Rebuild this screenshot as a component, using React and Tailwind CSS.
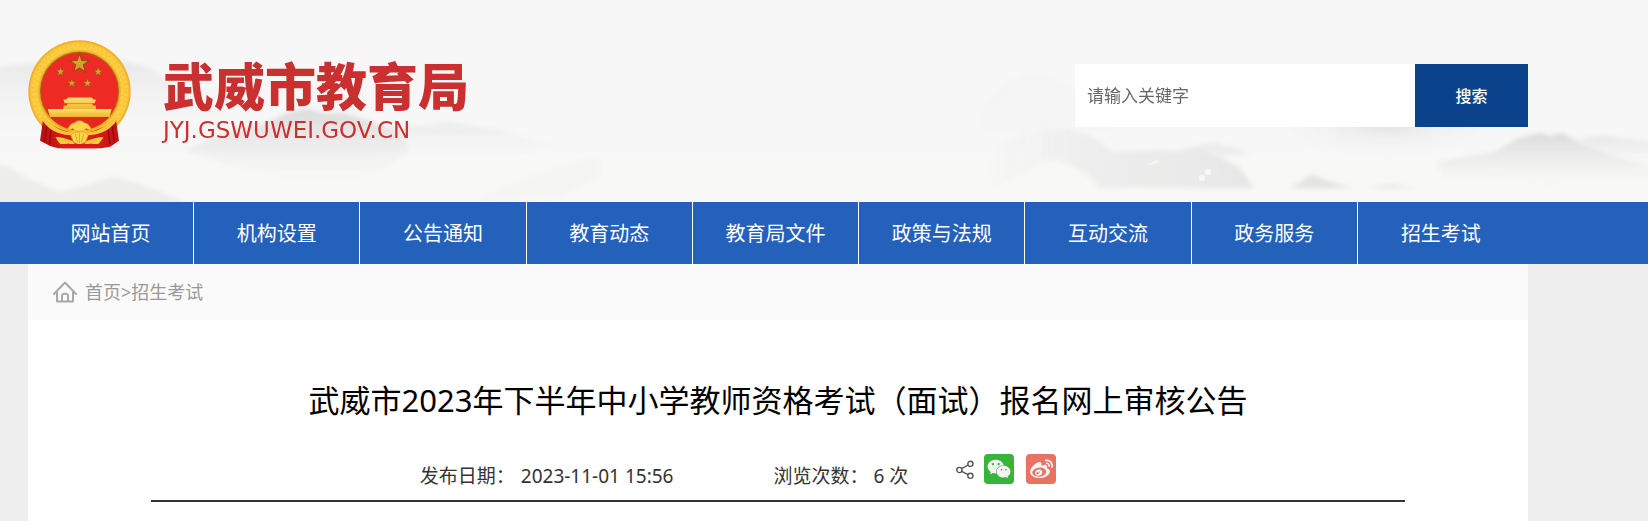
import { FaWeibo, FaWeixin } from "react-icons/fa";

const navItems = [
  "网站首页",
  "机构设置",
  "公告通知",
  "教育动态",
  "教育局文件",
  "政策与法规",
  "互动交流",
  "政务服务",
  "招生考试",
];

const STAR = "M0,-10 L2.4,-3.2 L9.5,-3.1 L3.8,1.2 L5.9,8.1 L0,4 L-5.9,8.1 L-3.8,1.2 L-9.5,-3.1 L-2.4,-3.2Z";

const stars = [
  { x: 238, y: 132, s: 3 },
  { x: 181, y: 156, s: 1.4 },
  { x: 294, y: 156, s: 1.4 },
  { x: 215, y: 190, s: 1.4 },
  { x: 262, y: 190, s: 1.4 },
];

const Emblem = () => (
  <svg viewBox="84 61 308 326" className="h-[109px] w-[103px] shrink-0" aria-hidden="true">
    <defs>
      <radialGradient id="ring" cx="238" cy="215" r="154" gradientUnits="userSpaceOnUse">
        <stop offset="0.74" stopColor="#d98d12" />
        <stop offset="0.81" stopColor="#fbc436" />
        <stop offset="0.92" stopColor="#ffd143" />
        <stop offset="1" stopColor="#e9a41c" />
      </radialGradient>
      <linearGradient id="gold" x1="0" y1="0" x2="0" y2="1">
        <stop offset="0" stopColor="#ffe070" />
        <stop offset="1" stopColor="#f3b52b" />
      </linearGradient>
      <linearGradient id="ribbon" x1="0" y1="0" x2="1" y2="0">
        <stop offset="0" stopColor="#b90f10" />
        <stop offset="0.5" stopColor="#ea1f1c" />
        <stop offset="1" stopColor="#c31212" />
      </linearGradient>
    </defs>
    <circle cx="238" cy="215" r="153" fill="url(#ring)" />
    <circle cx="238" cy="215" r="140" fill="none" stroke="#e3a122" strokeWidth="5" strokeDasharray="5 9" opacity="0.4" />
    <circle cx="238" cy="215" r="128" fill="none" stroke="#ffe27a" strokeWidth="4" strokeDasharray="8 7" opacity="0.45" />
    <circle cx="238" cy="214" r="118" fill="#a9650f" />
    <circle cx="238" cy="215" r="115" fill="#ee2a24" />
    {stars.map((star) => (
      <path
        key={`${star.x}-${star.y}`}
        d={STAR}
        transform={`translate(${star.x} ${star.y}) scale(${star.s})`}
        fill="#d9a02e"
        stroke="#8f4d10"
        strokeWidth="1"
      />
    ))}
    <path d="M204 233H274L280 239H287L284 250H276L278 257H286L288 267H189L191 257H200L202 250H193L190 239H198Z" fill="url(#gold)" />
    <path d="M200 251H278" stroke="#c8821b" strokeWidth="2" />
    <path d="M143 267H334L328 291H150Z" fill="url(#gold)" />
    <path d="M150 291H326C306 313 275 328 238 329C201 328 170 313 150 291Z" fill="#e8251f" />
    <path d="M130 291C150 316 190 338 238 340C286 338 326 316 346 291L356 362L330 380L302 385H174L150 378L120 362Z" fill="url(#ribbon)" />
    <path d="M124 282C155 322 190 336 214 337L226 326H250L262 337C286 336 321 322 352 282L346 306C324 336 292 344 262 346H214C184 344 152 336 130 306Z" fill="#f9c63b" />
    <path d="M140 318L134 366M152 330L149 372M336 318L342 366M324 330L329 372" stroke="#8d0b0c" strokeWidth="4" />
    <path d="M166 351C184 351 202 357 216 362L226 374H250L260 362C274 357 292 351 310 351C303 363 294 374 286 380L272 370L262 376H214L204 370L190 380C180 374 172 363 166 351Z" fill="#f7c93c" />
    <path d="M202 332C206 316 216 308 224 309C228 300 248 300 252 309C260 308 270 316 274 332L258 326L248 334H228L218 326Z" fill="#ffd54c" stroke="#dc9a1e" strokeWidth="2" />
    <path d="M212 346C220 332 256 332 264 346L256 366L238 375L220 366Z" fill="#ffd54c" stroke="#dc9a1e" strokeWidth="2" />
    <path d="M238 338V370M226 342L232 367M250 342L244 367" stroke="#d48f1a" strokeWidth="2" />
    <path d="M176 380L182 372H292L298 380L288 385H188Z" fill="#d81b1a" />
  </svg>
);

// ink-wash mountains behind the header
const Mountains = () => (
  <svg
    viewBox="0 0 1648 202"
    preserveAspectRatio="xMidYMid slice"
    className="absolute inset-0 h-full w-full"
    aria-hidden="true"
  >
    <defs>
      <linearGradient id="ink" x1="0" y1="0" x2="0" y2="1">
        <stop offset="0" stopColor="#d2d2d2" stopOpacity="0.75" />
        <stop offset="0.5" stopColor="#dedede" stopOpacity="0.4" />
        <stop offset="1" stopColor="#f7f7f7" stopOpacity="0" />
      </linearGradient>
      <linearGradient id="mist" x1="0" y1="0" x2="0" y2="1">
        <stop offset="0" stopColor="#dcdcdc" stopOpacity="0.6" />
        <stop offset="1" stopColor="#f7f7f7" stopOpacity="0" />
      </linearGradient>
      <linearGradient id="slope" x1="0" y1="0" x2="1" y2="0">
        <stop offset="0" stopColor="#eeeeed" stopOpacity="0" />
        <stop offset="0.35" stopColor="#ececec" stopOpacity="0.8" />
        <stop offset="1" stopColor="#e6e6e6" />
      </linearGradient>
      <radialGradient id="haze">
        <stop offset="0" stopColor="#d8d8d8" stopOpacity="0.7" />
        <stop offset="1" stopColor="#f7f7f7" stopOpacity="0" />
      </radialGradient>
      <filter id="soft" x="-10%" y="-10%" width="120%" height="120%">
        <feGaussianBlur stdDeviation="2" />
      </filter>
    </defs>
    <rect width="1648" height="202" fill="#f7f7f7" />
    <rect y="153" width="1648" height="49" fill="#f8f8f6" />
    <g filter="url(#soft)">
      <path d="M-10 68L30 64L70 58L118 60L150 68L190 96L230 112V140H-10Z" fill="url(#mist)" />
      <path d="M185 150L230 132L262 124L290 112L308 109L326 114L345 113L372 122L400 134L410 150L380 172L340 186L280 178L220 162Z" fill="url(#ink)" />
      <path d="M370 126L420 126L450 122L500 130L560 147L520 156L440 160L380 156Z" fill="url(#mist)" opacity="0.7" />
      <path d="M-10 163L8 166L30 180L60 192L84 186L112 177L140 184L170 196L190 204H-10Z" fill="#e8e8e6" opacity="0.7" />
      <path d="M480 200L515 182L560 166L600 156L600 176L560 196Z" fill="#f3f3f1" opacity="0.7" />
      <path d="M985 104L1005 84L1028 73L1052 76L1080 96L1110 112V130H985Z" fill="#f4f4f4" opacity="0.8" />
      <path d="M985 160L1005 142L1022 133L1068 128L1090 136L1102 143L1112 152L1135 151L1160 150L1180 151L1196 146L1220 157L1240 168L1254 188H1200L1150 187L1100 188L1085 172L1060 161L1040 162L1020 174L990 190Z" fill="url(#slope)" />
      <path d="M1196 146L1214 142L1240 150L1250 154L1222 156Z" fill="#ededed" />
      <ellipse cx="1385" cy="124" rx="125" ry="34" fill="url(#haze)" />
      <path d="M1290 188L1302 181L1311 174L1328 181L1352 188Z" fill="#dededc" opacity="0.8" />
      <path d="M1365 188L1392 184L1414 188Z" fill="#e2e2e0" opacity="0.7" />
      <path d="M1436 162L1470 156L1495 152L1516 139L1540 133L1550 136L1562 133L1580 143L1620 158L1655 168V178L1600 184L1550 188L1500 182L1444 178Z" fill="url(#ink)" />
      <path d="M1576 140L1600 136L1655 142V170L1620 158Z" fill="url(#mist)" />
    </g>
    <path d="M1147 165L1157 160L1160 162L1150 165Z" fill="#f7f7f6" />
    <circle cx="1202" cy="178" r="3" fill="#f7f7f6" />
    <circle cx="1208" cy="172" r="3" fill="#f7f7f6" />
  </svg>
);

const HomeIcon = () => (
  <svg viewBox="0 0 24 22" className="h-[22px] w-6" fill="none" stroke="#a8a8a8" strokeWidth="2" strokeLinejoin="round" aria-hidden="true">
    <path d="M1 13L12 1.5L23 13" strokeLinecap="round" />
    <path d="M4 11V20.5H20V11" />
    <path d="M9 20V14.5C9 12 15 12 15 14.5V20" />
  </svg>
);

const ShareIcon = () => (
  <svg viewBox="0 0 18 20" className="h-5 w-[18px]" fill="none" stroke="#555" strokeWidth="1.4" aria-hidden="true">
    <path d="M5.7 8.6L12 5M5.7 11.4L12 14.6" />
    <circle cx="3.4" cy="10" r="2.6" />
    <circle cx="14.4" cy="3.8" r="2.6" />
    <circle cx="14.4" cy="15.8" r="2.6" />
  </svg>
);

const Header = () => (
  <header className="relative bg-[#f7f7f7]">
    <Mountains />
    <div className="relative ml-7 flex h-[202px] max-w-[1500px] items-start justify-between">
      <a href="#" className="flex pt-10 text-[#c9302f]">
        <Emblem />
        <span className="flex flex-col pt-5 pl-8">
          <span className="font-['Liberation_Sans','Noto_Sans_CJK_SC',sans-serif] text-[51px] leading-[58px] font-black">
            武威市教育局
          </span>
          <span className="font-['DejaVu_Sans',sans-serif] text-[23px] leading-6">JYJ.GSWUWEI.GOV.CN</span>
        </span>
      </a>
      <form className="mt-16 flex h-[63px]" onSubmit={(e) => e.preventDefault()}>
        <input
          type="text"
          aria-label="请输入关键字"
          placeholder="请输入关键字"
          className="w-[340px] bg-white px-3 text-[17px] text-[#333] outline-none placeholder:text-[#666]"
        />
        <button type="submit" className="w-[113px] bg-[#0a438b] text-base font-medium text-white">
          搜索
        </button>
      </form>
    </div>
  </header>
);

const Nav = () => (
  <nav className="bg-[#2461ba]">
    <ul className="ml-7 grid max-w-[1496px] grid-cols-9">
      {navItems.map((item) => (
        <li key={item} className="border-r border-white last:border-r-0">
          <a href="#" className="block pt-0.5 text-center text-xl leading-[60px] text-white">
            {item}
          </a>
        </li>
      ))}
    </ul>
  </nav>
);

const Article = () => (
  <article className="px-[123px] pt-[60px]">
    <h1 className="text-center text-[31px] leading-10 text-black">
      武威市2023年下半年中小学教师资格考试（面试）报名网上审核公告
    </h1>
    <div className="mt-7 flex h-[54px] justify-center border-b-2 border-[#333] pr-20 text-[19px] text-[#333]">
      <p className="pt-3 leading-8">
        发布日期：<time className="pl-1.5">2023-11-01 15:56</time>
      </p>
      <p className="pt-3 pl-25 leading-8">浏览次数： 6 次</p>
      <div className="flex items-start pt-[6px] pl-12">
        <span className="mr-[10px] flex h-8 items-center">
          <ShareIcon />
        </span>
        <a href="#" aria-label="微信" className="mr-3 flex size-[30px] items-center justify-center rounded-sm bg-[#36b53c] text-[#f3f3f3]">
          <FaWeixin size={24} />
        </a>
        <a href="#" aria-label="微博" className="flex size-[30px] items-center justify-center rounded-sm bg-[#e97362] text-[#f3f3f3]">
          <FaWeibo size={23} />
        </a>
      </div>
    </div>
  </article>
);

const App = () => {
  return (
    <div className="flex min-h-screen flex-col bg-[#eee] font-['Noto_Sans','Noto_Sans_CJK_SC',sans-serif]">
      <Header />
      <Nav />
      <main className="ml-7 max-w-[1500px] grow bg-white">
        <div className="flex h-14 items-center gap-2 bg-[#fafafa] pl-[25px] text-lg text-[#999]">
          <HomeIcon />
          <div>
            <a href="#">首页</a>&gt;<a href="#">招生考试</a>
          </div>
        </div>
        <Article />
      </main>
    </div>
  );
};

export default App;
